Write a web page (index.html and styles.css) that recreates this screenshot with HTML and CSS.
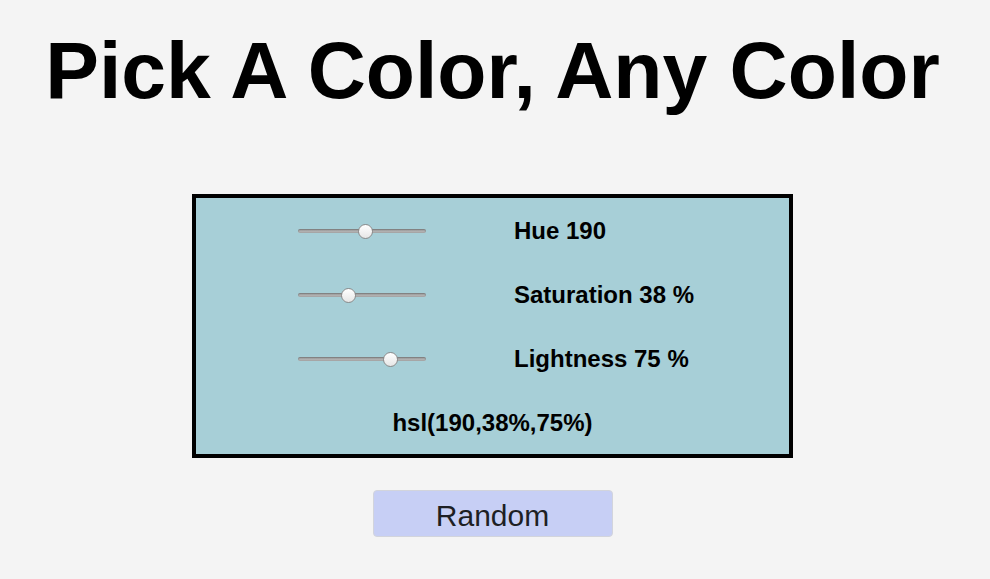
FILE: index.html
```html
<!DOCTYPE html>
<html lang="en">
<head>
<meta charset="utf-8">
<title>Pick A Color, Any Color</title>
<link rel="stylesheet" href="styles.css">
</head>
<body>
<main class="page">
  <h1 class="title">Pick A Color, Any Color</h1>
  <section class="picker">
    <input class="slider" type="range" min="0" max="360" value="190">
    <span class="label">Hue 190</span>
    <input class="slider" type="range" min="0" max="100" value="38">
    <span class="label">Saturation 38 %</span>
    <input class="slider" type="range" min="0" max="100" value="75">
    <span class="label">Lightness 75 %</span>
    <div class="value">hsl(190,38%,75%)</div>
  </section>
  <div class="actions">
    <button class="random" type="button">Random</button>
  </div>
</main>
</body>
</html>
```

FILE: styles.css
```css
html, body {
  margin: 0;
  padding: 0;
  background: #f4f4f4;
}

.page {
  width: 985px;
  display: flex;
  flex-direction: column;
  align-items: center;
  font-family: "Liberation Sans", Arial, sans-serif;
  color: #000;
}

.title {
  margin: 24px 0 0;
  font-size: 80.5px;
  line-height: 92px;
  font-weight: 700;
  text-align: center;
}

.picker {
  box-sizing: border-box;
  width: 601px;
  height: 264px;
  margin-top: 78px;
  border: 4px solid #000;
  background: hsl(190, 38%, 75%);
  padding: 14px 0 12px 102px;
  display: grid;
  grid-template-columns: 128px auto;
  grid-auto-rows: 38px;
  column-gap: 88px;
  row-gap: 26px;
  align-items: center;
}

.label {
  font-size: 24px;
  font-weight: 700;
  line-height: 38px;
}

.value {
  grid-column: 1 / -1;
  margin-left: -102px;
  text-align: center;
  font-size: 24px;
  font-weight: 700;
  line-height: 38px;
}

.slider {
  -webkit-appearance: none;
  appearance: none;
  width: 128px;
  height: 16px;
  margin: 0;
  padding: 0;
  background: transparent;
}

.slider::-webkit-slider-runnable-track {
  height: 4px;
  border-radius: 2px;
  background: linear-gradient(#8e8e8e, #c4c4c4);
  box-shadow: inset 0 0 0 1px rgba(0, 0, 0, 0.12);
}

.slider::-webkit-slider-thumb {
  -webkit-appearance: none;
  appearance: none;
  box-sizing: border-box;
  width: 15px;
  height: 15px;
  margin-top: -5.5px;
  border-radius: 50%;
  border: 1px solid #8a8a8a;
  background: linear-gradient(#ffffff, #e6e6e6);
}

.actions {
  margin-top: 32px;
  display: flex;
  justify-content: center;
}

.random {
  box-sizing: border-box;
  width: 240px;
  height: 47px;
  padding: 5px 0 0;
  border: 1px solid #d2d4dc;
  border-radius: 4px;
  background: #c7cff5;
  color: #1e1f24;
  font-family: "Liberation Sans", Arial, sans-serif;
  font-size: 30px;
  line-height: 1;
}
```
